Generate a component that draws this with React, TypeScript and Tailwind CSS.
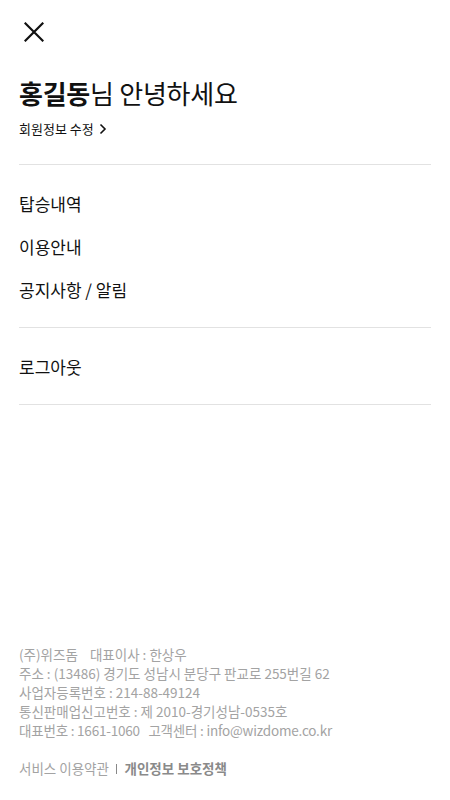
import React from "react";

export default function App() {
  const font = { fontFamily: '"Noto Sans CJK KR", "Noto Sans", sans-serif' };
  return (
    <div className="w-[450px] h-[800px] bg-white flex flex-col px-[19px] text-[#111]" style={font}>
      <div className="pt-[22px] pl-[5px]">
        <svg width="20" height="20" viewBox="0 0 20 20" fill="none" stroke="#111" strokeWidth="2.2" strokeLinecap="square">
          <path d="M1.5 1.5 L18.5 18.5 M18.5 1.5 L1.5 18.5" />
        </svg>
      </div>
      <div className="mt-[35px] text-[26px] leading-[32px] tracking-[-0.25px]">
        <span className="font-bold">홍길동</span>님 안녕하세요
      </div>
      <div className="mt-[11px] flex items-center gap-[5px] text-[13px] leading-[18px]">
        <span>회원정보 수정</span>
        <svg width="8" height="12" viewBox="0 0 8 12" fill="none" stroke="#111" strokeWidth="1.6">
          <path d="M1.5 1.5 L6 6 L1.5 10.5" />
        </svg>
      </div>
      <div className="mt-[26px] h-px bg-[#e2e2e2]" />
      <div className="pt-[17px] pb-[16px] text-[17px]">
        <div className="h-[43px] leading-[43px]">탑승내역</div>
        <div className="h-[43px] leading-[43px]">이용안내</div>
        <div className="h-[43px] leading-[43px]">공지사항 / 알림</div>
      </div>
      <div className="h-px bg-[#e2e2e2]" />
      <div className="pt-[17px] pb-[16px] text-[17px]">
        <div className="h-[43px] leading-[43px]">로그아웃</div>
      </div>
      <div className="h-px bg-[#e2e2e2]" />
      <div className="mt-auto pb-[22px] text-[13.5px] leading-[19px] text-[#a3a3a3]">
        <div>(주)위즈돔&nbsp;&nbsp;&nbsp;&nbsp;대표이사 : 한상우</div>
        <div>주소 : (13486) 경기도 성남시 분당구 판교로 255번길 62</div>
        <div>사업자등록번호 : 214-88-49124</div>
        <div>통신판매업신고번호 : 제 2010-경기성남-0535호</div>
        <div className="tracking-[-0.2px]">대표번호 : 1661-1060&nbsp;&nbsp;&nbsp;고객센터 : info@wizdome.co.kr</div>
        <div className="mt-[19px] flex items-center">
          <span>서비스 이용약관</span>
          <span className="mx-[7px] inline-block w-[1.5px] h-[10px] bg-[#888]" />
          <span className="font-bold text-[#8a8a8a]">개인정보 보호정책</span>
        </div>
      </div>
    </div>
  );
}
